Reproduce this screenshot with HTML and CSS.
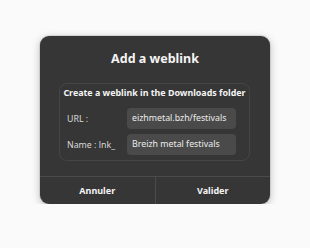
FILE: index.html
```html
<!DOCTYPE html>
<html>
<head>
<meta charset="utf-8">
<link rel="stylesheet" href="styles.css">
</head>
<body>
<div class="dialog">
  <div class="title">Add a weblink</div>
  <div class="frame">
    <div class="subtitle">Create a weblink in the Downloads folder</div>
    <div class="row">
      <span class="label">URL :</span>
      <div class="entry">eizhmetal.bzh/festivals</div>
    </div>
    <div class="row">
      <span class="label">Name : lnk_</span>
      <div class="entry">Breizh metal festivals</div>
    </div>
  </div>
  <div class="buttons">
    <div class="btn">Annuler</div>
    <div class="btn">Valider</div>
  </div>
</div>
</body>
</html>
```

FILE: styles.css
```css
html, body {
  margin: 0;
  padding: 0;
  background: #fafafa;
  font-family: "Noto Sans", "Open Sans", sans-serif;
}
.dialog {
  margin: 36px 0 0 40px;
  width: 230px;
  height: 168px;
  background: #363636;
  border-radius: 9px;
  box-shadow: 0 2px 8px rgba(0,0,0,0.25), 0 0 0 1px rgba(0,0,0,0.08);
  display: flex;
  flex-direction: column;
  color: #f4f4f4;
  overflow: hidden;
}
.title {
  text-align: center;
  font-weight: bold;
  font-size: 12.5px;
  line-height: 18px;
  margin-top: 14px;
  height: 18px;
}
.frame {
  margin: 15px 20px 0 19px;
  height: 74px;
  border: 1px solid #454545;
  border-radius: 8px;
  padding: 2px 0 0 0;
  display: flex;
  flex-direction: column;
}
.subtitle {
  text-align: center;
  font-weight: bold;
  font-size: 8.9px;
  line-height: 14px;
  margin-bottom: 8px;
  white-space: nowrap;
}
.row {
  display: flex;
  align-items: center;
  height: 21px;
  margin-bottom: 5px;
  padding-left: 7px;
}
.label {
  width: 60px;
  flex: none;
  font-size: 8.8px;
  color: #d8d8d8;
  white-space: nowrap;
}
.entry {
  width: 104px;
  height: 21px;
  line-height: 21px;
  background: #4a4a4a;
  border-radius: 4px;
  font-size: 8.8px;
  color: #ececec;
  padding-left: 5px;
  overflow: hidden;
  white-space: nowrap;
}
.buttons {
  margin-top: auto;
  height: 27px;
  border-top: 1px solid #4a4a4a;
  display: flex;
}
.btn {
  flex: 1;
  text-align: center;
  line-height: 27px;
  font-weight: bold;
  font-size: 9px;
}
.btn + .btn {
  border-left: 1px solid #4a4a4a;
}
```
